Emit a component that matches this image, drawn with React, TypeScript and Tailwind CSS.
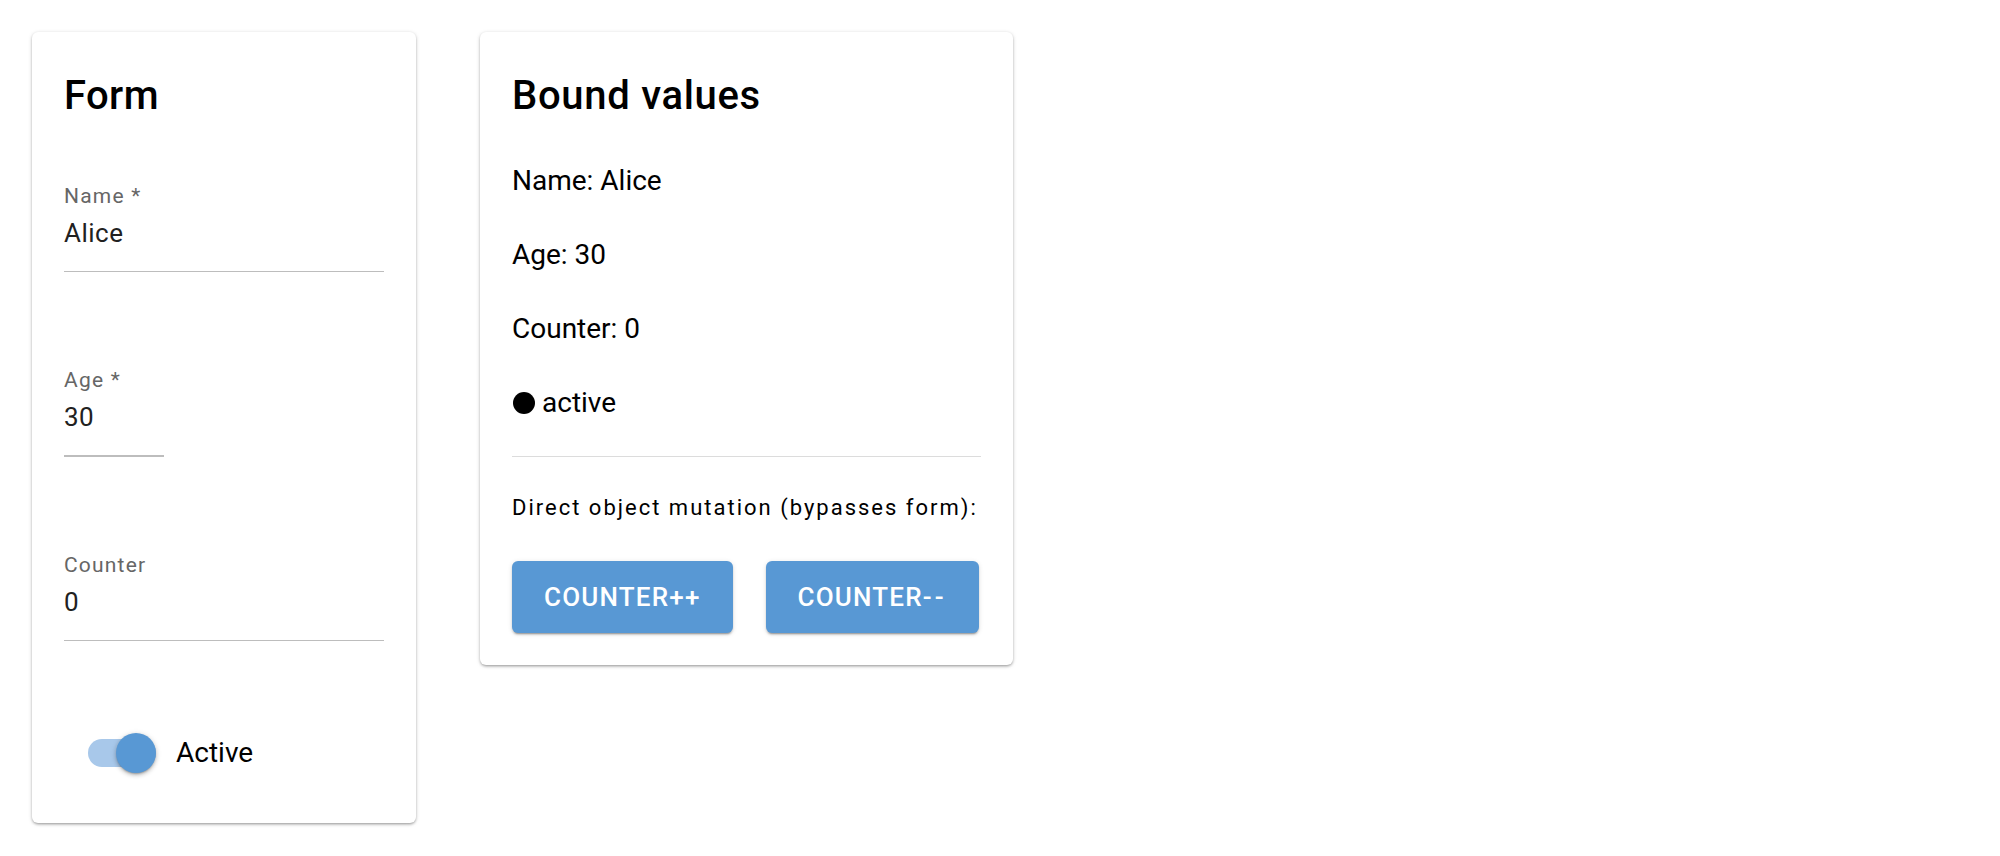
import React from "react";

const font = { fontFamily: "Roboto, 'Noto Sans', sans-serif" };

function Field({ label, value, width }: { label: string; value: string; width: string }) {
  return (
    <div className={width}>
      <div className="h-[24px] text-[21px] leading-[24px] tracking-[1.2px] text-[#666666] whitespace-nowrap">{label}</div>
      <div className="mt-[5px] h-[40px] text-[26px] leading-[40px] tracking-[0.5px] text-[#212121]">{value}</div>
      <div className="mt-[18px] h-[1.33px] bg-[#bdbdbd]" />
    </div>
  );
}

export default function App() {
  return (
    <div className="min-h-[856px] bg-white" style={font}>
      <div className="flex items-start gap-[64px] pl-[32px] pt-[32px]">
        <div className="w-[384px] rounded-[6px] bg-white p-[32px] shadow-[0_2px_3px_-1px_rgba(0,0,0,0.24),0_1px_3px_0_rgba(0,0,0,0.16),0_1px_5px_0_rgba(0,0,0,0.1)]">
          <div className="h-[64px] text-[40px] font-medium leading-[64px] tracking-[0.4px] text-black">Form</div>
          <div className="mt-[56px] flex flex-col gap-[96px]">
            <Field label="Name *" value="Alice" width="w-[320px]" />
            <Field label="Age *" value="30" width="w-[100px]" />
            <Field label="Counter" value="0" width="w-[320px]" />
          </div>
          <div className="mt-[74px] flex h-[76px] items-center pl-[24px]">
            <div className="relative h-[40px] w-[68px]">
              <div className="absolute left-0 top-[6px] h-[28px] w-[68px] rounded-full bg-[#a8c8ea]" />
              <div className="absolute right-0 top-0 h-[40px] w-[40px] rounded-full bg-[#5898d4] shadow-[0_2px_2px_-1px_rgba(0,0,0,0.25),0_2px_4px_0_rgba(0,0,0,0.18),0_1px_6px_0_rgba(0,0,0,0.12)]" />
            </div>
            <div className="ml-[20px] text-[28px] leading-[40px] text-black">Active</div>
          </div>
        </div>

        <div className="w-[533px] rounded-[6px] bg-white p-[32px] shadow-[0_2px_3px_-1px_rgba(0,0,0,0.24),0_1px_3px_0_rgba(0,0,0,0.16),0_1px_5px_0_rgba(0,0,0,0.1)]">
          <div className="h-[64px] text-[40px] font-medium leading-[64px] tracking-[0.7px] text-black">Bound values</div>
          <div className="mt-[32px] text-[28px] leading-[42px] text-black">Name: Alice</div>
          <div className="mt-[32px] text-[28px] leading-[42px] text-black">Age: 30</div>
          <div className="mt-[32px] text-[28px] leading-[42px] text-black">Counter: 0</div>
          <div className="mt-[32px] flex items-center text-[28px] leading-[42px] text-black">
            <span className="ml-[1px] inline-block h-[22px] w-[22px] rounded-full bg-black" />
            <span className="ml-[7px]">active</span>
          </div>
          <div className="mt-[32px] h-[1.33px] bg-[#dcdcdc]" />
          <div className="mt-[35px] whitespace-nowrap text-[22px] leading-[32px] tracking-[2px] text-black">
            Direct object mutation (bypasses form):
          </div>
          <div className="mt-[37px] flex gap-[33px]">
            <button className="h-[72px] rounded-[6px] bg-[#5898d4] px-[32px] text-[26px] font-medium uppercase tracking-[1.2px] text-white shadow-[0_3px_1px_-2px_rgba(0,0,0,0.2),0_2px_2px_0_rgba(0,0,0,0.14),0_1px_5px_0_rgba(0,0,0,0.12)]">
              Counter++
            </button>
            <button className="h-[72px] rounded-[6px] bg-[#5898d4] px-[32px] text-[26px] font-medium uppercase tracking-[1.2px] text-white shadow-[0_3px_1px_-2px_rgba(0,0,0,0.2),0_2px_2px_0_rgba(0,0,0,0.14),0_1px_5px_0_rgba(0,0,0,0.12)]">
              Counter<span className="tracking-[3.2px]">--</span>
            </button>
          </div>
        </div>
      </div>
    </div>
  );
}
